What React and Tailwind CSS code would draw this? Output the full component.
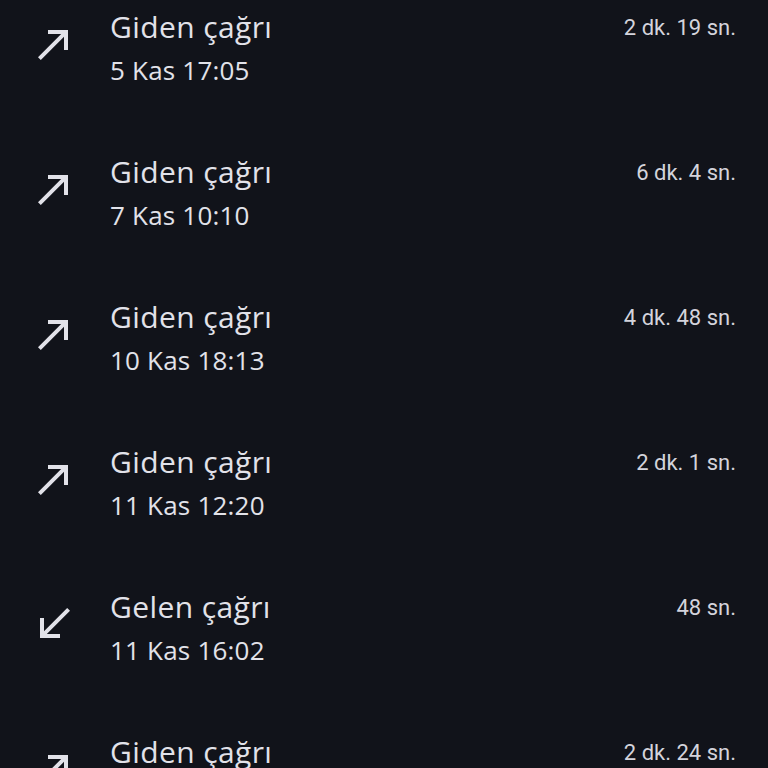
import React from 'react';

const calls = [
  { type: 'out', title: 'Giden çağrı', date: '5 Kas 17:05', dur: '2 dk. 19 sn.' },
  { type: 'out', title: 'Giden çağrı', date: '7 Kas 10:10', dur: '6 dk. 4 sn.' },
  { type: 'out', title: 'Giden çağrı', date: '10 Kas 18:13', dur: '4 dk. 48 sn.' },
  { type: 'out', title: 'Giden çağrı', date: '11 Kas 12:20', dur: '2 dk. 1 sn.' },
  { type: 'in', title: 'Gelen çağrı', date: '11 Kas 16:02', dur: '48 sn.' },
  { type: 'out', title: 'Giden çağrı', date: '12 Kas 09:41', dur: '2 dk. 24 sn.' },
];

function CallIcon({ type }) {
  return (
    <svg viewBox="0 0 24 24" className="w-12 h-12 shrink-0 fill-[#e2e2e9]">
      {type === 'out' ? (
        <path d="M9 5v2h6.59L4 18.59 5.41 20 17 8.41V15h2V5z" />
      ) : (
        <path d="M20 5.41L18.59 4 7 15.59V9H5v10h10v-2H8.41z" />
      )}
    </svg>
  );
}

export default function App() {
  return (
    <div className="w-[768px] h-[768px] overflow-hidden bg-[#11131a] text-[#e2e2e9] font-['Roboto','Liberation_Sans',sans-serif]">
      <div className="-mt-[40px]">
        {calls.map((c, i) => (
          <div key={i} className="h-[145px] flex items-start pt-[49px] pr-[32px]">
            <div className="ml-[30px] mt-[11px]">
              <CallIcon type={c.type} />
            </div>
            <div className="ml-[32px] flex-1 font-['Open_Sans','Roboto',sans-serif]">
              <div className="text-[30px] leading-[36px] tracking-[0.4px]">{c.title}</div>
              <div className="mt-[9px] text-[26px] leading-[32px] tracking-[0.2px]">{c.date}</div>
            </div>
            <div className="mt-[1px] text-[22px] leading-[36px] text-[#d4d4dc]">{c.dur}</div>
          </div>
        ))}
      </div>
    </div>
  );
}
